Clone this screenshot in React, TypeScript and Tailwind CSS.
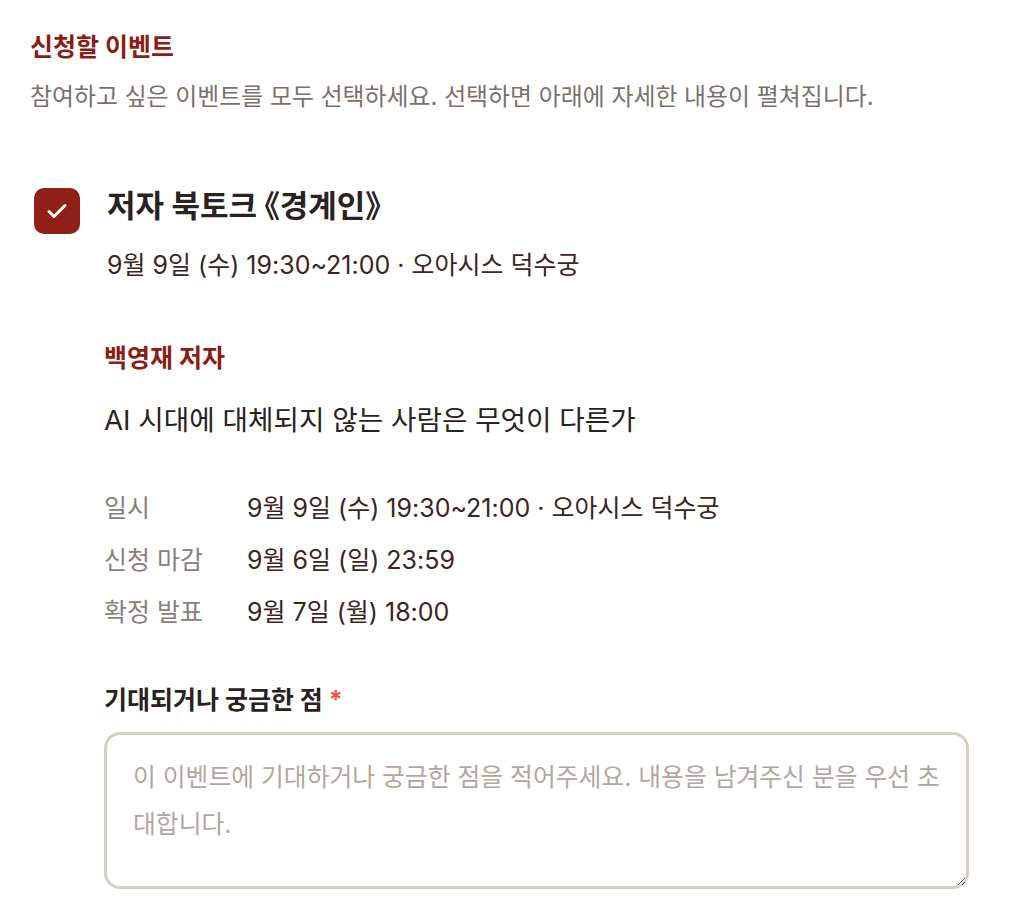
import React from "react";

export default function App() {
  const rows: [string, string][] = [
    ["일시", "9월 9일 (수) 19:30~21:00 · 오아시스 덕수궁"],
    ["신청 마감", "9월 6일 (일) 23:59"],
    ["확정 발표", "9월 7일 (월) 18:00"],
  ];
  return (
    <div className="min-h-[920px] bg-white px-[30px] pt-[30px] font-['Inter','Noto_Sans_CJK_KR','Noto_Sans',sans-serif]">
      <h2 className="text-[25px] font-bold leading-[34px] text-[#8c1d14]">신청할 이벤트</h2>
      <p className="mt-[16px] text-[23.9px] leading-[34px] text-[#7b716b]">
        참여하고 싶은 이벤트를 모두 선택하세요. 선택하면 아래에 자세한 내용이 펼쳐집니다.
      </p>

      <div className="mt-[72px] flex items-start gap-[27px] pl-[4px]">
        <div className="mt-[2px] flex h-[46px] w-[46px] shrink-0 items-center justify-center rounded-[10px] bg-[#8f2118]">
          <svg width="26" height="26" viewBox="0 0 26 26" fill="none" stroke="white" strokeWidth="3" strokeLinecap="round" strokeLinejoin="round">
            <path d="M5 13.5l5 5L21 7.5" />
          </svg>
        </div>
        <div>
          <div className="text-[31px] font-bold leading-[40px] text-[#29221f]">
            저자 북토크 <span className="[font-feature-settings:'palt']">《</span>경계인<span className="[font-feature-settings:'palt']">》</span>
          </div>
          <div className="mt-[22px] text-[25px] leading-[34px] text-[#3d2420]">
            9월 9일 (수) 19:30~21:00 · 오아시스 덕수궁
          </div>
        </div>
      </div>

      <div className="ml-[74px] mt-[59px]">
        <div className="text-[25px] font-bold leading-[34px] text-[#8c1d14]">백영재 저자</div>
        <div className="mt-[25px] text-[27.7px] leading-[40px] text-[#29221f]">
          AI 시대에 대체되지 않는 사람은 무엇이 다른가
        </div>

        <div className="mt-[51px] flex flex-col gap-[18px]">
          {rows.map(([k, v]) => (
            <div key={k} className="flex text-[25px] leading-[34px]">
              <div className="w-[143px] shrink-0 text-[#8a8079]">{k}</div>
              <div className="text-[#3d2420]">{v}</div>
            </div>
          ))}
        </div>

        <div className="mt-[54px] text-[25px] font-bold leading-[34px] text-[#29221f]">
          기대되거나 궁금한 점 <span className="text-[#e2564a]">*</span>
        </div>
        <textarea
          className="mt-[15px] block h-[157px] w-[865px] resize-y rounded-[16px] border-[3px] border-[#d8cfc0] bg-white pb-[10px] pl-[26px] pr-[16px] pt-[19px] text-[24.8px] leading-[47px] text-[#3d2420] outline-none placeholder:text-[#b1a89d]"
          placeholder="이 이벤트에 기대하거나 궁금한 점을 적어주세요. 내용을 남겨주신 분을 우선 초대합니다."
        />
      </div>
    </div>
  );
}
